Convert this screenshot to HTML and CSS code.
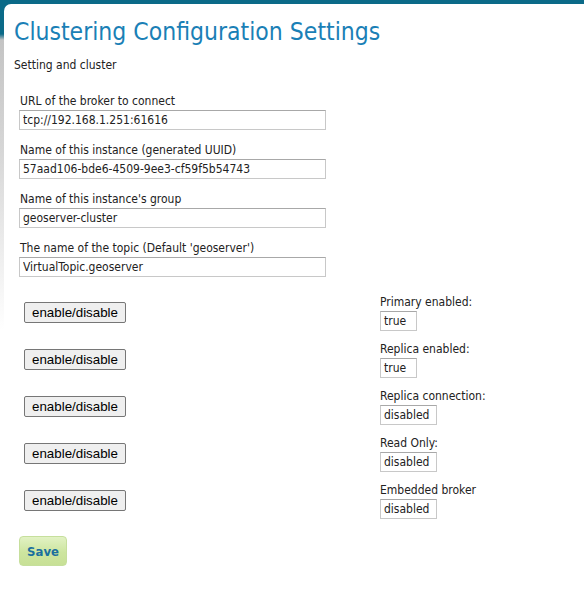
FILE: index.html
```html
<!DOCTYPE html>
<html>
<head>
<meta charset="utf-8">
<link rel="stylesheet" href="styles.css">
</head>
<body>
<div class="frame">
  <div class="page">
    <h1 class="title">Clustering Configuration Settings</h1>
    <p class="subtitle">Setting and cluster</p>
    <form class="form">
      <div class="fields">
        <div class="field">
          <label class="label">URL of the broker to connect</label>
          <input class="text" type="text" value="tcp://192.168.1.251:61616">
        </div>
        <div class="field">
          <label class="label">Name of this instance (generated UUID)</label>
          <input class="text" type="text" value="57aad106-bde6-4509-9ee3-cf59f5b54743">
        </div>
        <div class="field">
          <label class="label">Name of this instance's group</label>
          <input class="text" type="text" value="geoserver-cluster">
        </div>
        <div class="field">
          <label class="label">The name of the topic (Default 'geoserver')</label>
          <input class="text" type="text" value="VirtualTopic.geoserver">
        </div>
      </div>
      <div class="toggles">
        <div class="toggle">
          <button class="btn" type="button">enable/disable</button>
          <div class="status">
            <span class="label">Primary enabled:</span>
            <span class="value short">true</span>
          </div>
        </div>
        <div class="toggle">
          <button class="btn" type="button">enable/disable</button>
          <div class="status">
            <span class="label">Replica enabled:</span>
            <span class="value short">true</span>
          </div>
        </div>
        <div class="toggle">
          <button class="btn" type="button">enable/disable</button>
          <div class="status">
            <span class="label">Replica connection:</span>
            <span class="value">disabled</span>
          </div>
        </div>
        <div class="toggle">
          <button class="btn" type="button">enable/disable</button>
          <div class="status">
            <span class="label">Read Only:</span>
            <span class="value">disabled</span>
          </div>
        </div>
        <div class="toggle">
          <button class="btn" type="button">enable/disable</button>
          <div class="status">
            <span class="label">Embedded broker</span>
            <span class="value">disabled</span>
          </div>
        </div>
      </div>
      <div class="actions">
        <button class="save" type="button">Save</button>
      </div>
    </form>
  </div>
</div>
</body>
</html>
```
FILE: styles.css
```css
html, body {
  margin: 0;
  padding: 0;
  background: #ffffff;
}

body {
  font-family: "DejaVu Sans Condensed", "DejaVu Sans", sans-serif;
  font-stretch: condensed;
  font-size: 12px;
  color: #222222;
}

.frame {
  min-height: 593px;
  padding: 4px 0 0 4px;
  background:
    linear-gradient(to bottom, #0b6a88 0, #0b6a88 4px, rgba(255,255,255,0) 4px),
    linear-gradient(to bottom, #0b6a88 0, #0b6a88 34px, #c4c4c4 40px, #d6d6d6 150px, #ffffff 330px);
  box-sizing: border-box;
}

.page {
  background: #ffffff;
  border-top-left-radius: 7px;
  min-height: 589px;
  padding: 12px 0 0 10px;
  box-sizing: border-box;
}

.title {
  margin: 0;
  font-size: 24.5px;
  font-weight: normal;
  line-height: 32px;
  color: #1a80b6;
}

.subtitle {
  margin: 10px 0 0 0;
  line-height: 15px;
}

.form {
  margin: 21px 0 0 5px;
}

.fields {
  display: flex;
  flex-direction: column;
  gap: 13px;
}

.field {
  display: flex;
  flex-direction: column;
  gap: 1px;
}

.label {
  display: block;
  padding-left: 1px;
  line-height: 15px;
  color: #222222;
}

.text {
  width: 307px;
  height: 20px;
  box-sizing: border-box;
  margin: 0;
  padding: 0 3px;
  border: 1px solid #c8c8c8;
  border-top-color: #a8a8a8;
  font: inherit;
  font-stretch: condensed;
  color: #222222;
  background: #ffffff;
}

.toggles {
  margin-top: 18px;
  display: flex;
  flex-direction: column;
  gap: 12px;
}

.toggle {
  display: flex;
  align-items: center;
  height: 35px;
}

.btn {
  margin-left: 5px;
  width: 102px;
  height: 21px;
  padding: 0;
  border: 1px solid #767676;
  border-radius: 2px;
  background: #efefef;
  font-family: "Liberation Sans", Arial, sans-serif;
  font-size: 13.33px;
  color: #000000;
}

.status {
  margin-left: 254px;
  display: flex;
  flex-direction: column;
  align-items: flex-start;
  gap: 1px;
}

.status .label {
  padding-left: 0;
}

.value {
  display: block;
  width: 57px;
  height: 20px;
  box-sizing: border-box;
  padding: 0 3px;
  border: 1px solid #c8c8c8;
  border-top-color: #a8a8a8;
  line-height: 18px;
  color: #222222;
}

.value.short {
  width: 37px;
}

.actions {
  margin-top: 18px;
}

.save {
  width: 48px;
  height: 30px;
  padding: 0;
  border: 1px solid #c6df9c;
  border-radius: 4px;
  background: linear-gradient(to bottom, #e2f2c4 0%, #cde59f 55%, #c7e096 100%);
  font-family: "DejaVu Sans Condensed", "DejaVu Sans", sans-serif;
  font-stretch: condensed;
  font-weight: bold;
  font-size: 13px;
  color: #1a6f9e;
}
```
